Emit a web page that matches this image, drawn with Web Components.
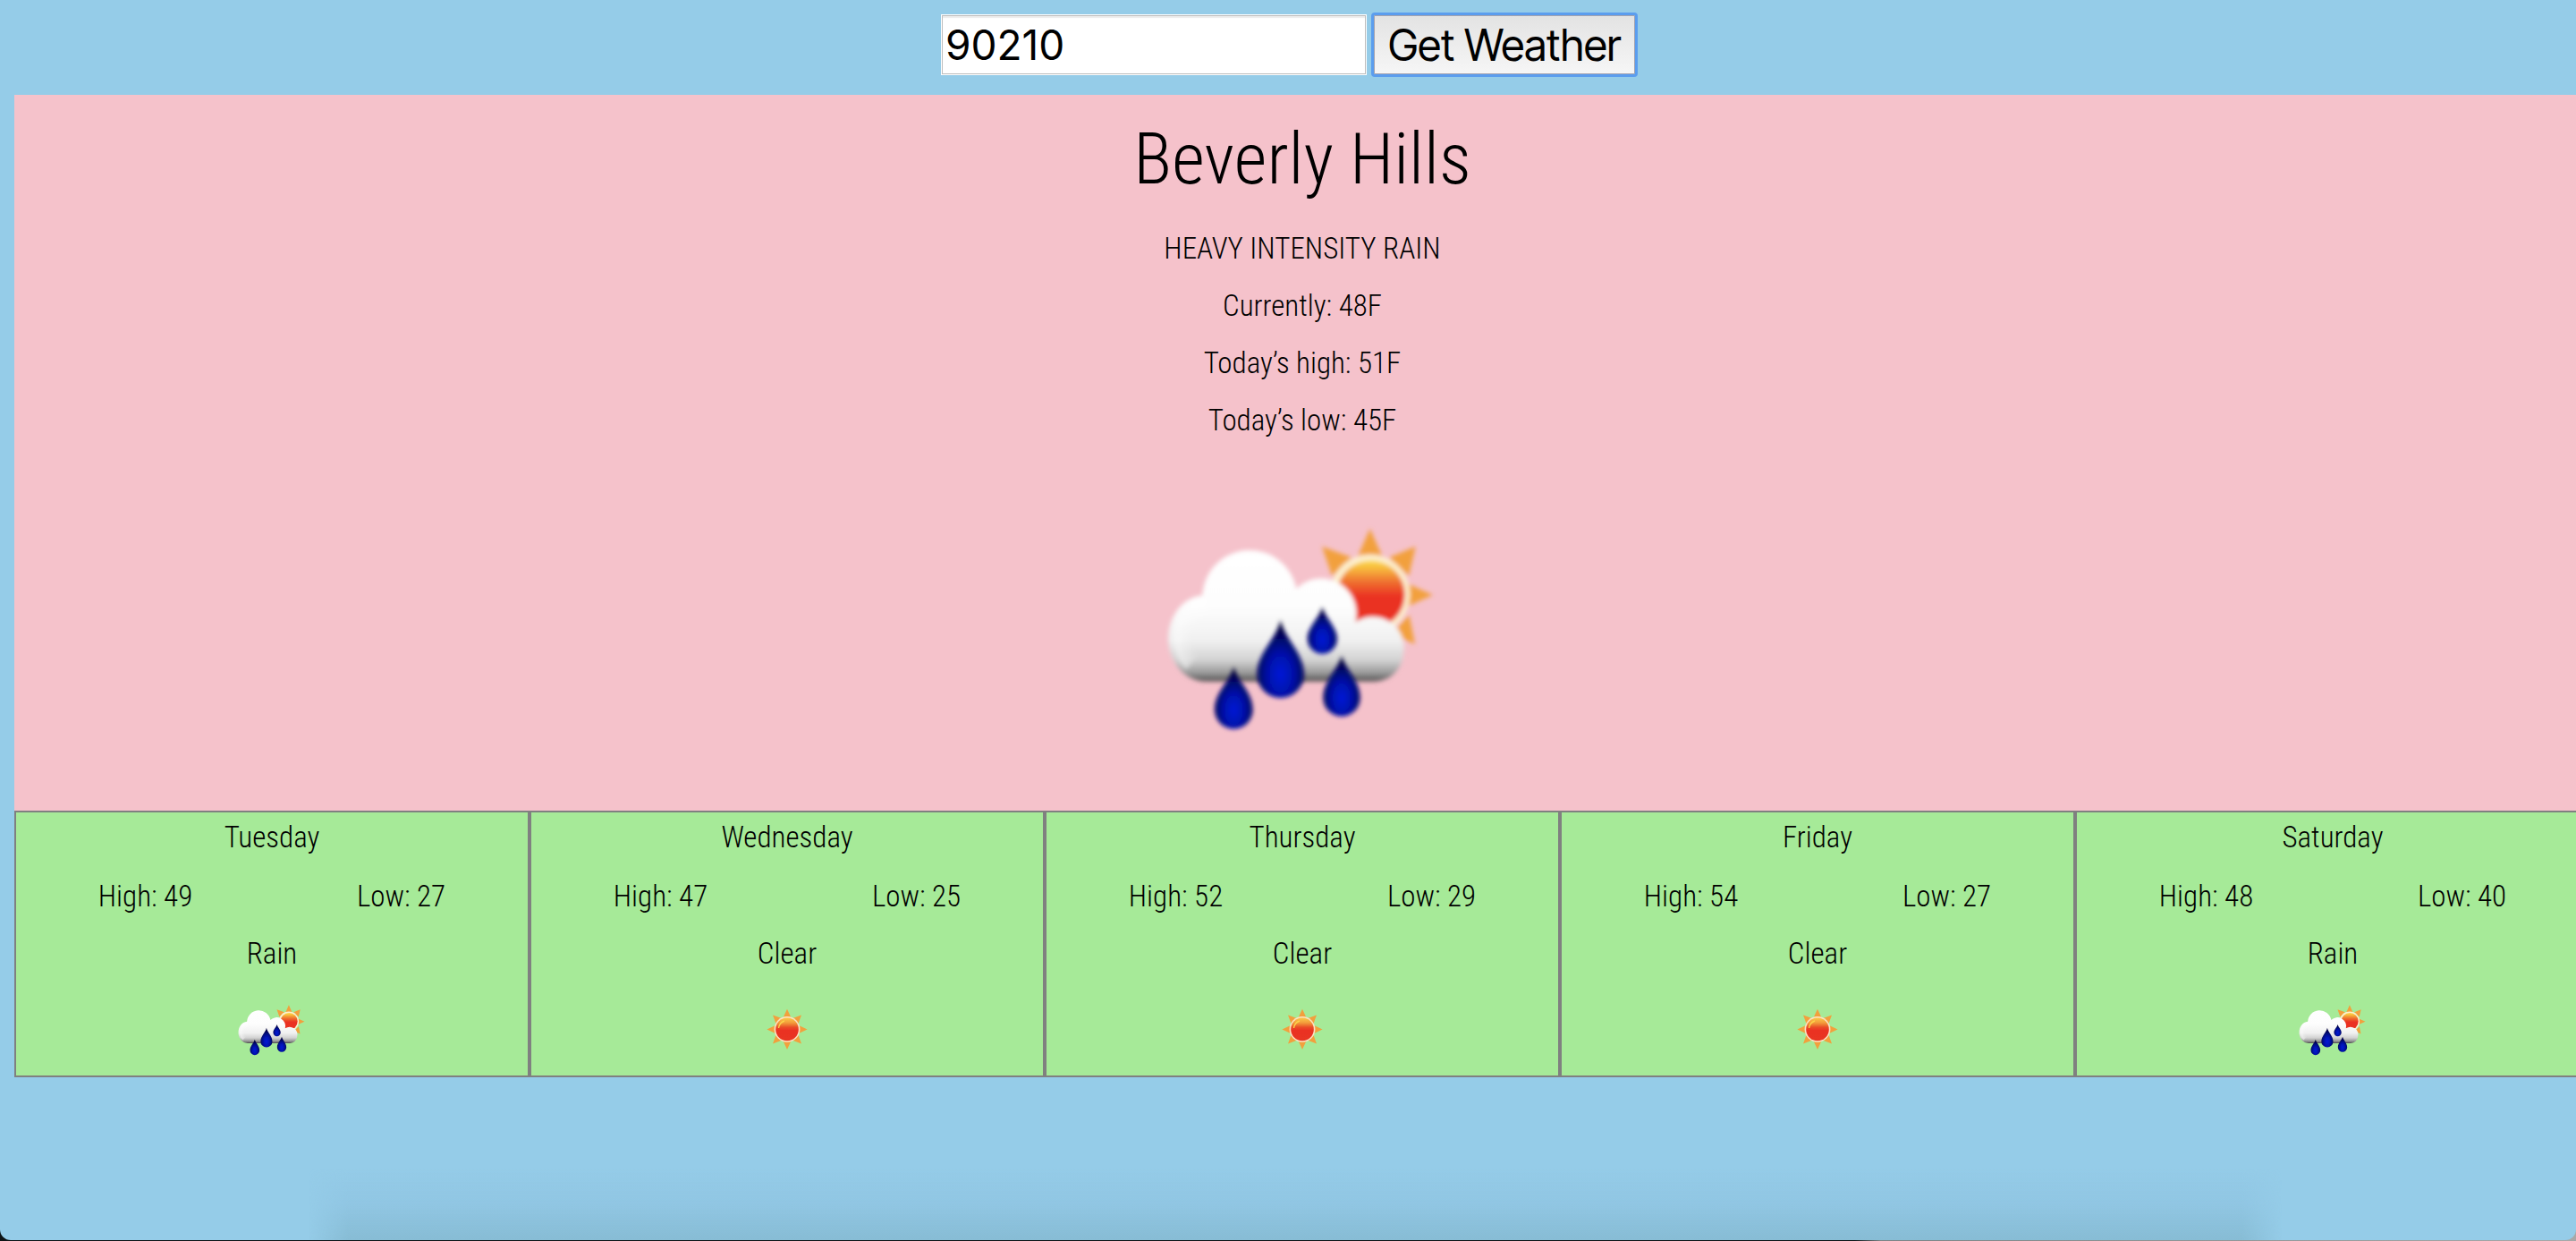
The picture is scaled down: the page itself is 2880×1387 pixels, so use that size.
<!DOCTYPE html>
<html lang="en">
<head>
<meta charset="utf-8">
<title>Weather</title>
<style>
  html {
    min-height: 100%;
    background: linear-gradient(to right, #0d1416 72%, #7d8486 73%, #a8a8a8);
  }
  body { margin: 0; overflow-x: hidden; }
</style>
</head>
<body>
<weather-app>
  <zip-search slot="search" value="90210"></zip-search>
  <current-weather city="Beverly Hills" icon="rain">
    <p>HEAVY INTENSITY RAIN</p>
    <p>Currently: 48F</p>
    <p>Today’s high: 51F</p>
    <p>Today’s low: 45F</p>
  </current-weather>
  <forecast-list>
    <forecast-day day="Tuesday" high="49" low="27" icon="rain">Rain</forecast-day>
    <forecast-day day="Wednesday" high="47" low="25" icon="clear">Clear</forecast-day>
    <forecast-day day="Thursday" high="52" low="29" icon="clear">Clear</forecast-day>
    <forecast-day day="Friday" high="54" low="27" icon="clear">Clear</forecast-day>
    <forecast-day day="Saturday" high="48" low="40" icon="rain">Rain</forecast-day>
  </forecast-list>
</weather-app>

<script>
const ICONS = {
  rain: `
    <svg viewBox="-72 -192 1200 1200" role="img" aria-label="Rain">
      <defs>
        <linearGradient id="disk" gradientUnits="userSpaceOnUse" x1="0" y1="165" x2="0" y2="290">
          <stop offset="0" stop-color="#fce04a"/><stop offset=".25" stop-color="#f7b93d"/>
          <stop offset=".6" stop-color="#ef7230"/><stop offset="1" stop-color="#ea3223"/>
        </linearGradient>
        <linearGradient id="cloud" gradientUnits="userSpaceOnUse" x1="0" y1="115" x2="0" y2="578">
          <stop offset="0" stop-color="#fff"/><stop offset=".45" stop-color="#fdfdfd"/>
          <stop offset=".7" stop-color="#f0f0f0"/><stop offset=".84" stop-color="#d2d2d2"/>
          <stop offset=".93" stop-color="#9a9a9a"/><stop offset="1" stop-color="#484848"/>
        </linearGradient>
        <radialGradient id="drop" cx=".5" cy=".7" r=".62">
          <stop offset="0" stop-color="#001ad8"/><stop offset=".45" stop-color="#0010a8"/>
          <stop offset=".8" stop-color="#00055c"/><stop offset="1" stop-color="#000336"/>
        </radialGradient>
        <radialGradient id="lobe" gradientUnits="userSpaceOnUse" cx="225" cy="430" r="140">
          <stop offset=".5" stop-color="#fff" stop-opacity="0"/><stop offset="1" stop-color="#fff" stop-opacity=".6"/>
        </radialGradient>
        <filter id="soft" x="-10%" y="-10%" width="120%" height="120%"><feGaussianBlur stdDeviation="8"/></filter>
      </defs>
      <g filter="url(#soft)">
        <g fill="#f2a03c">
          <path d="M755 62 800 165H710Z"/>
          <path d="M908 122 885 222 818 160Z"/>
          <path d="M966 285 865 330V240Z"/>
          <path d="M906 450 828 415 886 352Z"/>
          <path d="M594 122 695 160 628 222Z"/>
        </g>
        <circle cx="755" cy="283" r="134" fill="#fdf0cf"/>
        <circle cx="758" cy="283" r="114" fill="url(#disk)"/>
        <path fill="url(#cloud)" d="M215 575A124 143 0 0 1 193 286A159 159 0 0 1 508 264A118 118 0 0 1 706 376A104 104 0 0 1 866 486A98 95 0 0 1 770 575Z"/>
        <path fill="url(#lobe)" d="M203 290A124 143 0 0 0 138 535L225 435Z"/>
      </g>
      <g fill="url(#drop)" filter="url(#soft)">
        <path d="M298 525C310 575 362 610 362 670A64 64 0 0 1 234 670C234 610 286 575 298 525Z"/>
        <path d="M455 368C468 430 534 480 534 551A79 79 0 0 1 376 551C376 480 442 430 455 368Z"/>
        <path d="M595 324C603 360 645 392 645 432A50 50 0 0 1 545 432C545 392 587 360 595 324Z"/>
        <path d="M660 488C671 532 722 572 722 630A62 62 0 0 1 598 630C598 572 649 532 660 488Z"/>
      </g>
    </svg>`,
  clear: `
    <svg viewBox="0 0 100 100" role="img" aria-label="Clear">
      <defs>
        <linearGradient id="disk" x1="0" y1="0" x2="0" y2="1">
          <stop offset="0" stop-color="#fbc94a"/><stop offset=".22" stop-color="#f29a3a"/>
          <stop offset=".42" stop-color="#ea4a28"/><stop offset=".55" stop-color="#ea3223"/><stop offset="1" stop-color="#e83523"/>
        </linearGradient>
        <filter id="soft" x="-10%" y="-10%" width="120%" height="120%"><feGaussianBlur stdDeviation=".6"/></filter>
      </defs>
      <g filter="url(#soft)">
        <g fill="#f2a03c">
          <path id="ray" d="M50 25.8 55 36.5H45Z"/>
          <use href="#ray" transform="rotate(45 50 48.4)"/>
          <use href="#ray" transform="rotate(90 50 48.4)"/>
          <use href="#ray" transform="rotate(135 50 48.4)"/>
          <use href="#ray" transform="rotate(180 50 48.4)"/>
          <use href="#ray" transform="rotate(225 50 48.4)"/>
          <use href="#ray" transform="rotate(270 50 48.4)"/>
          <use href="#ray" transform="rotate(315 50 48.4)"/>
        </g>
        <circle cx="50" cy="48.4" r="14.4" fill="#fbe3c4"/>
        <circle cx="50" cy="48.4" r="12.8" fill="url(#disk)"/>
        <path d="M40.5 47A10 10 0 0 1 47 39" fill="none" stroke="#fbd24a" stroke-width="1.4"/>
      </g>
    </svg>`
};

class WeatherIcon extends HTMLElement {
  connectedCallback() {
    this.attachShadow({ mode: 'open' }).innerHTML = `
      <style>
        :host { display: block; width: var(--icon-size, 100px); aspect-ratio: 1; }
        svg { display: block; width: 100%; height: 100%; }
      </style>${ICONS[this.getAttribute('name')]}`;
  }
}

class WeatherApp extends HTMLElement {
  connectedCallback() {
    this.attachShadow({ mode: 'open' }).innerHTML = `
      <style>
        :host {
          display: flex; flex-direction: column; box-sizing: border-box;
          min-height: calc(100vh - 1px); padding-left: 16px; overflow: hidden;
          background: #95cce8; border-radius: 0 0 12px 12px; color: #000;
          font: 350 33px/32px "Roboto Condensed", "Liberation Sans Narrow", sans-serif;
        }
        main { width: 100vw; }
        footer {
          width: 77%; height: 80px; margin: auto auto 0;
          background: linear-gradient(to bottom, #87bcd400, #8cc0de80 50%, #87bcd4);
          mask-image: linear-gradient(to right, transparent, #000 2%, #000 98%, transparent);
        }
      </style>
      <slot name="search"></slot>
      <main><slot></slot></main>
      <footer></footer>`;
  }
}

class ZipSearch extends HTMLElement {
  connectedCallback() {
    this.attachShadow({ mode: 'open' }).innerHTML = `
      <style>
        :host { display: block; padding: 16px 16px 22px 0; }
        form { display: flex; justify-content: center; align-items: center; gap: 8px; margin: 0; }
        input, button { box-sizing: border-box; margin: 0; color: #000; }
        input {
          width: 476px; height: 68px; padding: 2px 4px; border: 1px solid #fff; outline: none;
          font: 400 46px/56px Inter, sans-serif;
          background: #fff; box-shadow: inset 0 0 0 1px #bdbdbd, inset 0 3px 1px #ececec;
        }
        button {
          height: 66px; padding: 2px 15px 0; border: 1px solid #a3a3b0; outline: 3px solid #5b9dee;
          font: 400 48px/56px "Inter Tight", Inter, sans-serif;
          border-radius: 1px; background: linear-gradient(#e3e3e3, #f6f6f6);
        }
      </style>
      <form>
        <input type="text" aria-label="Zip code" value="${this.getAttribute('value')}">
        <button type="button">Get Weather</button>
      </form>`;
  }
}

class CurrentWeather extends HTMLElement {
  connectedCallback() {
    this.attachShadow({ mode: 'open' }).innerHTML = `
      <style>
        :host {
          display: flex; flex-direction: column; align-items: center;
          padding-top: 24px; background: #f5c2cb; --icon-size: 400px;
        }
        h1 { margin: 0 0 36px; font-size: 80px; line-height: 96px; font-weight: inherit; }
        section { display: flex; flex-direction: column; gap: 32px; text-align: center; }
        ::slotted(p) { margin: 0; }
        weather-icon { margin-top: 20px; }
      </style>
      <h1>${this.getAttribute('city')}</h1>
      <section><slot></slot></section>
      <weather-icon name="${this.getAttribute('icon')}"></weather-icon>`;
  }
}

class ForecastList extends HTMLElement {
  connectedCallback() {
    this.attachShadow({ mode: 'open' }).innerHTML = `
      <style>:host { display: grid; grid-template-columns: repeat(5, 1fr); }</style>
      <slot></slot>`;
  }
}

class ForecastDay extends HTMLElement {
  connectedCallback() {
    const a = n => this.getAttribute(n);
    this.attachShadow({ mode: 'open' }).innerHTML = `
      <style>
        :host {
          display: flex; flex-direction: column; align-items: center;
          padding-top: 12px; border: 2px solid #808080; background: #a6ea98;
        }
        h2 { margin: 0 0 34px; font: inherit; }
        .range { display: flex; justify-content: space-around; align-self: stretch; margin-bottom: 32px; }
        weather-icon { margin-top: 20px; }
      </style>
      <h2>${a('day')}</h2>
      <div class="range"><span>High: ${a('high')}</span><span>Low: ${a('low')}</span></div>
      <div><slot></slot></div>
      <weather-icon name="${a('icon')}"></weather-icon>`;
  }
}

customElements.define('weather-icon', WeatherIcon);
customElements.define('weather-app', WeatherApp);
customElements.define('zip-search', ZipSearch);
customElements.define('current-weather', CurrentWeather);
customElements.define('forecast-list', ForecastList);
customElements.define('forecast-day', ForecastDay);
</script>
</body>
</html>
